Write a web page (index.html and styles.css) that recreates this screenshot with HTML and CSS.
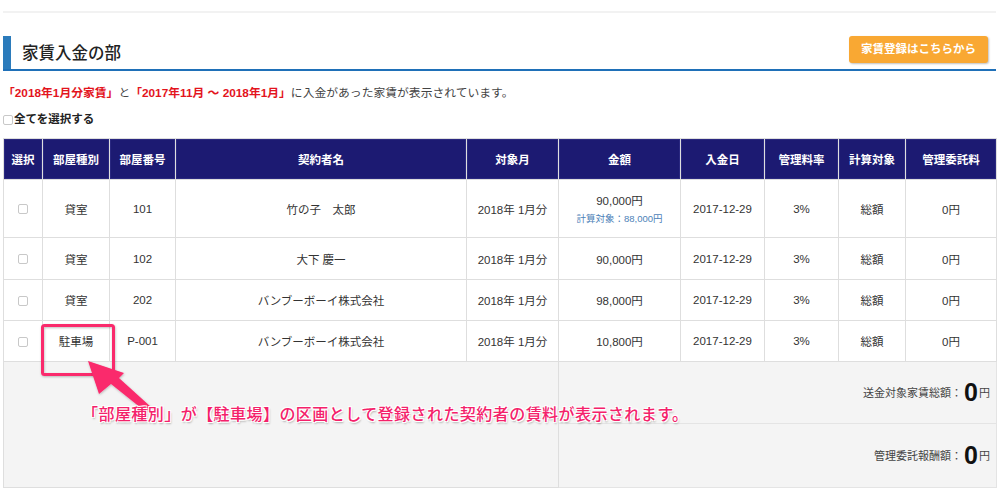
FILE: index.html
```html
<!DOCTYPE html>
<html lang="ja">
<head>
<meta charset="utf-8">
<link rel="stylesheet" href="styles.css">
</head>
<body>
<div class="page">
  <div class="topline"></div>
  <div class="section-head">
    <h2 class="section-title">家賃入金の部</h2>
    <a class="btn-orange">家賃登録はこちらから</a>
  </div>
  <p class="info"><span class="red">「2018年1月分家賃」</span>と<span class="red">「2017年11月 〜 2018年1月」</span>に入金があった家賃が表示されています。</p>
  <label class="select-all"><input type="checkbox" class="cb cb-all">全てを選択する</label>
  <table class="rent-table">
    <colgroup>
      <col class="c1"><col class="c2"><col class="c3"><col class="c4"><col class="c5">
      <col class="c6"><col class="c7"><col class="c8"><col class="c9"><col class="c10">
    </colgroup>
    <thead>
      <tr>
        <th>選択</th><th>部屋種別</th><th>部屋番号</th><th>契約者名</th><th>対象月</th>
        <th>金額</th><th>入金日</th><th>管理料率</th><th>計算対象</th><th>管理委託料</th>
      </tr>
    </thead>
    <tbody>
      <tr class="row-tall">
        <td><input type="checkbox" class="cb"></td><td>貸室</td><td>101</td><td>竹の子　太郎</td><td>2018年 1月分</td>
        <td><div>90,000円</div><div class="sub">計算対象：88,000円</div></td><td>2017-12-29</td><td>3%</td><td>総額</td><td>0円</td>
      </tr>
      <tr class="row-a">
        <td><input type="checkbox" class="cb"></td><td>貸室</td><td>102</td><td>大下 慶一</td><td>2018年 1月分</td>
        <td>90,000円</td><td>2017-12-29</td><td>3%</td><td>総額</td><td>0円</td>
      </tr>
      <tr class="row-b">
        <td><input type="checkbox" class="cb"></td><td>貸室</td><td>202</td><td>バンブーボーイ株式会社</td><td>2018年 1月分</td>
        <td>98,000円</td><td>2017-12-29</td><td>3%</td><td>総額</td><td>0円</td>
      </tr>
      <tr class="row-b">
        <td><input type="checkbox" class="cb"></td><td>駐車場</td><td>P-001</td><td>バンブーボーイ株式会社</td><td>2018年 1月分</td>
        <td>10,800円</td><td>2017-12-29</td><td>3%</td><td>総額</td><td>0円</td>
      </tr>
    </tbody>
    <tfoot>
      <tr class="foot-1">
        <td colspan="5" rowspan="2" class="foot-blank"></td>
        <td colspan="5" class="foot-total">送金対象家賃総額：<span class="big">0</span>円</td>
      </tr>
      <tr class="foot-2">
        <td colspan="5" class="foot-total">管理委託報酬額：<span class="big">0</span>円</td>
      </tr>
    </tfoot>
  </table>

  <svg class="annot-svg" width="1000" height="500" viewBox="0 0 1000 500">
    <defs>
      <filter id="sh" x="-20%" y="-20%" width="140%" height="140%">
        <feDropShadow dx="0.5" dy="1" stdDeviation="0.8" flood-color="#000" flood-opacity="0.25"/>
      </filter>
    </defs>
    <rect x="42.5" y="314.5" width="71" height="49" rx="2" fill="none" stroke="#fa2c6c" stroke-width="3" filter="url(#sh)"/>
    <polygon points="88,350 124,362 119,367 151,396 146,401 111,373 99,383" fill="#fa2c6c" filter="url(#sh)"/>
  </svg>
  <div class="annot-text">「部屋種別」が【駐車場】の区画として登録された契約者の賃料が表示されます。</div>
</div>
</body>
</html>
```

FILE: styles.css
```css
html, body {
  margin: 0;
  padding: 0;
  background: #fff;
}
body {
  font-family: "Liberation Sans", "Noto Sans CJK JP", sans-serif;
  color: #333;
}
.page {
  position: relative;
  width: 993px;
  height: 500px;
  margin-left: 3px;
}
.topline {
  margin-top: 11px;
  height: 2px;
  background: #f2f2f2;
}
.section-head {
  display: flex;
  justify-content: space-between;
  align-items: flex-start;
  margin-top: 23px;
  border-bottom: 2px solid #1f70b8;
}
.section-title {
  margin: 0;
  height: 33px;
  line-height: 34px;
  border-left: 8px solid #2b7bbb;
  padding-left: 11px;
  font-size: 16.5px;
  font-weight: 500;
  color: #222;
}
.btn-orange {
  display: block;
  margin-right: 8px;
  width: 139px;
  height: 27px;
  line-height: 27px;
  text-align: center;
  background: #f9a833;
  color: #fff;
  font-size: 11.5px;
  font-weight: bold;
  border-radius: 3px;
  box-shadow: 1px 1px 2px rgba(0,0,0,0.25);
}
.info {
  margin: 15px 0 0 0;
  font-size: 11.8px;
  line-height: 15px;
  color: #444;
}
.red {
  color: #e3141d;
  font-weight: bold;
}
.select-all {
  display: flex;
  align-items: center;
  margin-top: 11px;
  font-size: 11.5px;
  font-weight: bold;
  line-height: 15px;
  color: #222;
}
.cb {
  -webkit-appearance: none;
  appearance: none;
  width: 10px;
  height: 10px;
  margin: 0;
  border: 1px solid #c8c8c8;
  border-radius: 2px;
  background: #fff;
  vertical-align: middle;
}
.cb-all {
  margin-right: 1px;
}
.rent-table {
  margin-top: 11px;
  width: 993px;
  table-layout: fixed;
  border-collapse: collapse;
  font-size: 11.5px;
  color: #333;
}
.c1 { width: 39px; }
.c2 { width: 67px; }
.c3 { width: 66px; }
.c4 { width: 291px; }
.c5 { width: 92px; }
.c6 { width: 122px; }
.c7 { width: 84px; }
.c8 { width: 74px; }
.c9 { width: 67px; }
.c10 { width: 91px; }
.rent-table th,
.rent-table td {
  border: 1px solid #dedede;
  padding: 0;
  text-align: center;
  vertical-align: middle;
}
.rent-table thead tr {
  height: 41px;
}
.rent-table th {
  background: #1c1a72;
  color: #fff;
  font-weight: bold;
  font-size: 11.5px;
  box-shadow: inset 0 0 0 1px #2a2880;
}
.row-tall { height: 58px; }
.row-a { height: 42px; }
.row-b { height: 41px; }
.sub {
  margin-top: 3px;
  font-size: 9.5px;
  color: #4d82b8;
}
.foot-1 { height: 62px; }
.foot-2 { height: 64px; }
.foot-blank,
.rent-table .foot-total {
  background: #f4f4f4;
  border-color: #e4e4e4;
}
.rent-table .foot-total {
  text-align: right;
  padding-right: 6px;
  font-size: 11px;
  color: #444;
}
.big {
  font-size: 25px;
  font-weight: bold;
  color: #111;
  font-family: "Liberation Sans", sans-serif;
  vertical-align: -4px;
  margin: 0 1px 0 2px;
}
.annot-svg {
  position: absolute;
  left: -3px;
  top: 0;
  pointer-events: none;
}
.annot-text {
  position: absolute;
  left: 79px;
  top: 392px;
  font-size: 16px;
  letter-spacing: 0.45px;
  line-height: 20px;
  color: #f4216a;
  font-family: "Noto Sans CJK JP", sans-serif;
  font-weight: 500;
  white-space: nowrap;
  text-shadow: 1px 1px 0 #fff, -1px -1px 0 #fff, 1px -1px 0 #fff, -1px 1px 0 #fff, 1px 2px 2px rgba(0,0,0,0.3);
}
```
